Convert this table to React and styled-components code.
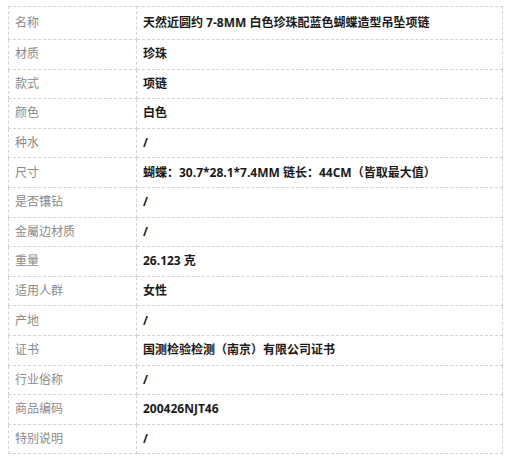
import React from "react";
import styled, { createGlobalStyle } from "styled-components";

const Global = createGlobalStyle`
  html, body { margin: 0; padding: 0; background: #fff; }
  body { font-family: "Open Sans", "Noto Sans CJK SC", sans-serif; }
`;

const Page = styled.div`
  padding: 6px 0 0 8px;
`;

const Table = styled.table`
  width: 495px;
  border-collapse: collapse;
  table-layout: fixed;
  font-size: 12px;
`;

const Row = styled.tr`
  height: ${(p) => (p.$tall ? "33px" : "29.6px")};
`;

const Cell = styled.td`
  border: 1px dashed #d2d2d2;
  padding: 0 0 0 6px;
  vertical-align: middle;
  white-space: nowrap;
  line-height: 16px;
`;

const LabelCell = styled(Cell)`
  width: 121px;
  color: #8a8a8a;
  font-weight: 400;
`;

const ValueCell = styled(Cell)`
  color: #1a1a1a;
  font-weight: 700;
`;

const rows = [
  ["名称", "天然近圆约 7-8MM 白色珍珠配蓝色蝴蝶造型吊坠项链"],
  ["材质", "珍珠"],
  ["款式", "项链"],
  ["颜色", "白色"],
  ["种水", "/"],
  ["尺寸", "蝴蝶：30.7*28.1*7.4MM 链长：44CM（皆取最大值）"],
  ["是否镶钻", "/"],
  ["金屬边材质", "/"],
  ["重量", "26.123 克"],
  ["适用人群", "女性"],
  ["产地", "/"],
  ["证书", "国测检验检测（南京）有限公司证书"],
  ["行业俗称", "/"],
  ["商品编码", "200426NJT46"],
  ["特别说明", "/"],
];

export default function App() {
  return (
    <Page>
      <Global />
      <Table>
        <tbody>
          {rows.map(([k, v], i) => (
            <Row key={k} $tall={i === 0}>
              <LabelCell>{k}</LabelCell>
              <ValueCell>{v}</ValueCell>
            </Row>
          ))}
        </tbody>
      </Table>
    </Page>
  );
}
